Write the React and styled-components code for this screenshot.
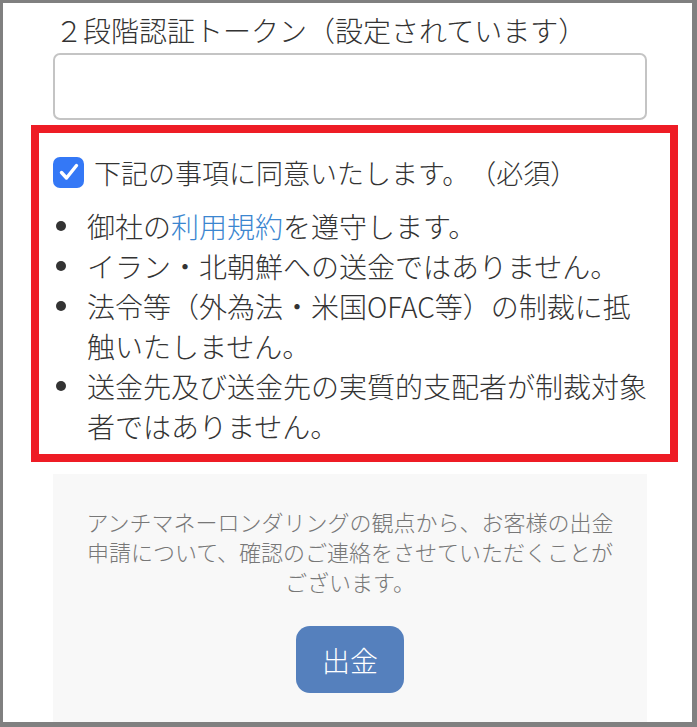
import React from 'react';
import styled, { createGlobalStyle } from 'styled-components';

const GlobalStyle = createGlobalStyle`
  * { box-sizing: border-box; }
  body {
    margin: 0;
    background: #ffffff;
    font-family: "Noto Sans CJK JP", "Noto Sans", sans-serif;
    text-spacing-trim: space-all;
  }
`;

const Frame = styled.div`
  width: 697px;
  height: 727px;
  overflow: hidden;
  background: #ffffff;
  border-style: solid;
  border-color: #808080;
  border-width: 3px 5px 5px 3px;
  padding: 7px 0 0 50px;
  font-weight: 300;
`;

const Column = styled.div`
  width: 594px;
`;

const Heading = styled.div`
  font-size: 28px;
  line-height: 40px;
  color: #333333;
  padding-left: 2px;
  white-space: nowrap;
`;

const TokenInput = styled.input`
  display: block;
  width: 100%;
  height: 67px;
  margin-top: 3px;
  border: 2px solid #c4c4c4;
  border-radius: 7px;
  background: #ffffff;
  outline: none;
`;

const Agreement = styled.div`
  margin: 5px -31px 0 -22px;
  border: 8px solid #ee1c25;
  padding: 19px 14px 8px 14px;
  color: #333333;
`;

const CheckRow = styled.label`
  display: flex;
  align-items: center;
  gap: 10px;
  height: 40px;
  font-size: 27px;
  white-space: nowrap;
`;

const CheckBox = styled.span`
  width: 31px;
  height: 31px;
  border-radius: 7px;
  background: #3478f6;
  display: flex;
  align-items: center;
  justify-content: center;
  flex-shrink: 0;
`;

const Terms = styled.ul`
  list-style: none;
  margin: 14px 0 0 0;
  padding: 0;
`;

const Term = styled.li`
  display: flex;
  font-size: 28px;
  line-height: 40px;
  &::before {
    content: '';
    width: 10px;
    height: 10px;
    border-radius: 50%;
    background: #333333;
    flex-shrink: 0;
    margin: 15px 21px 0 3px;
  }
`;

const Link = styled.a`
  color: #3b86d0;
  text-decoration: none;
`;

const Notice = styled.div`
  margin-top: 12px;
  background: #f8f8f8;
  padding: 32px 28px 40px;
  display: flex;
  flex-direction: column;
  align-items: center;
`;

const NoticeText = styled.p`
  margin: 0;
  font-size: 22px;
  line-height: 30px;
  color: #777777;
  text-align: center;
`;

const Submit = styled.button`
  margin-top: 30px;
  width: 108px;
  height: 67px;
  border: none;
  border-radius: 14px;
  background: #5580bd;
  color: #ffffff;
  font-family: inherit;
  font-weight: 300;
  font-size: 28px;
`;

export default function App() {
  return (
    <>
      <GlobalStyle />
      <Frame>
        <Column>
          <Heading>２段階認証トークン（設定されています）</Heading>
          <TokenInput type="text" />
          <Agreement>
            <CheckRow>
              <CheckBox>
                <svg width="24" height="24" viewBox="0 0 24 24" fill="none">
                  <path d="M4.5 12.5l5 5.5L19.5 5.5" stroke="#fff" strokeWidth="3.4" strokeLinecap="round" strokeLinejoin="round" />
                </svg>
              </CheckBox>
              下記の事項に同意いたします。（必須）
            </CheckRow>
            <Terms>
              <Term><span>御社の<Link href="#">利用規約</Link>を遵守します。</span></Term>
              <Term><span>イラン・北朝鮮への送金ではありません。</span></Term>
              <Term><span>法令等（外為法・米国OFAC等）の制裁に抵触いたしません。</span></Term>
              <Term><span>送金先及び送金先の実質的支配者が制裁対象者ではありません。</span></Term>
            </Terms>
          </Agreement>
          <Notice>
            <NoticeText>
              アンチマネーロンダリングの観点から、お客様の出金申請について、確認のご連絡をさせていただくことがございます。
            </NoticeText>
            <Submit>出金</Submit>
          </Notice>
        </Column>
      </Frame>
    </>
  );
}
